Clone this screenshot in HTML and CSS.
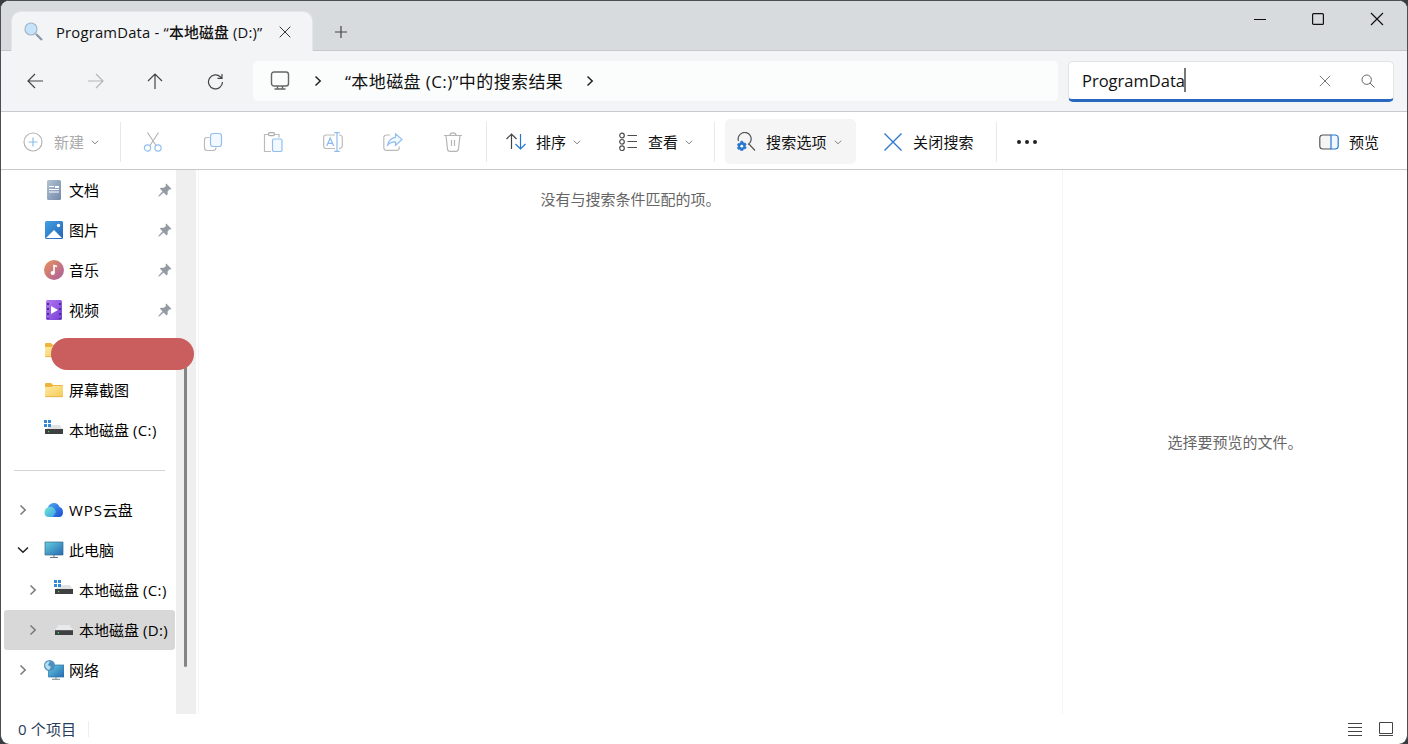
FILE: index.html
```html
<!DOCTYPE html>
<html lang="zh-CN">
<head>
<meta charset="utf-8">
<title>ProgramData</title>
<link rel="stylesheet" href="styles.css">
</head>
<body>
<svg class="defs" width="0" height="0">
  <defs>
    <linearGradient id="gDoc" x1="0" y1="0" x2="1" y2="1"><stop offset="0" stop-color="#b3c3d3"/><stop offset="1" stop-color="#7189aa"/></linearGradient>
    <linearGradient id="gPic" x1="0" y1="0" x2="1" y2="1"><stop offset="0" stop-color="#43a1e3"/><stop offset="1" stop-color="#2463b6"/></linearGradient>
    <linearGradient id="gMusic" x1="0" y1="0" x2="1" y2="1"><stop offset="0" stop-color="#eb9259"/><stop offset="1" stop-color="#a75da0"/></linearGradient>
    <linearGradient id="gVideo" x1="0" y1="0" x2="1" y2="1"><stop offset="0" stop-color="#b476f0"/><stop offset="1" stop-color="#7540d6"/></linearGradient>
    <linearGradient id="gFolder" x1="0" y1="0" x2="1" y2="1"><stop offset="0" stop-color="#fdeaa4"/><stop offset="1" stop-color="#f5ca56"/></linearGradient>
    <linearGradient id="gScreen" x1="0" y1="0" x2="1" y2="1"><stop offset="0" stop-color="#65cfdc"/><stop offset="1" stop-color="#2668b5"/></linearGradient>
    <linearGradient id="gCloudA" x1="0" y1="0" x2="1" y2="1"><stop offset="0" stop-color="#75ead0"/><stop offset="1" stop-color="#389de8"/></linearGradient>
    <linearGradient id="gCloudB" x1="0" y1="0" x2="1" y2="1"><stop offset="0" stop-color="#51a8f5"/><stop offset="1" stop-color="#174cd0"/></linearGradient>
    <symbol id="pin" viewBox="0 0 14 14"><path fill="#949ba3" d="M8.2.5 13.4 5.700l-1.100.8-.8-.2-1.900 2.300.1 2.700-1.100 1.100-3-3L1.200 13.500.4 13.600l.1-.8 4-4.500-2.600-2.600 1-1 3 .1 2.100-1.800-.5-1.400z"/></symbol>
    <symbol id="folder" viewBox="0 0 20 16"><path fill="#eeb43c" d="M1 2Q1 1 2 1h5l2 2h9q1 0 1 1v3H1z"/><path fill="url(#gFolder)" d="M1 5h6l2-1h10v10q0 1-1 1H2q-1 0-1-1z"/><path stroke="#dca637" stroke-width=".7" d="M1.500 14.700h17"/></symbol>
    <symbol id="drive" viewBox="0 0 20 12"><path fill="#e9eaec" d="M4.500 1h11L19 6H1z"/><path fill="#3e4041" d="M1 6h18v5H1z"/><path fill="#686b6c" d="M1 6h18v.8H1z"/><path fill="#42e44c" d="M3.800 8h1.200v1.500H3.800z"/></symbol>
    <symbol id="systemDrive" viewBox="0 0 20 18"><path fill="#e1e2e4" d="M8 6h8l3 4.500H1z"/><path fill="#3e4041" d="M1 10h18v5H1z"/><path fill="#42e44c" d="M4 12h1.200v1.200H4z"/><path fill="#3289d4" d="M0 1h3v3H0zm4 0h3v3H4zM0 5h3v3H0zm4 0h3v3H4z"/></symbol>
    <symbol id="more" viewBox="0 0 8 5"><path d="m.8.8 3.200 3 3.200-3" fill="none" stroke="currentColor" stroke-width="1"/></symbol>
    <symbol id="right" viewBox="0 0 8 12"><path d="m1.500 1.500 4.700 4.500-4.700 4.500" fill="none" stroke="currentColor" stroke-width="1.500"/></symbol>
  </defs>
</svg>

<div class="window">
  <header class="titlebar">
    <div class="tab">
      <svg class="tab-icon" width="20" height="20" viewBox="0 0 20 20" fill="none"><path d="m12 12 6 6" stroke="#8797a9" stroke-width="2.200"/><circle cx="7" cy="7" r="6" fill="#c5e4fb" stroke="#a5b5c6" stroke-width="1.200"/></svg>
      <span class="tab-title">ProgramData - “本地磁盘 (D:)”</span>
      <svg class="tab-close" width="12" height="12" viewBox="0 0 12 12"><path d="m.7.700 10.600 10.600m0-10.600L.7 11.300" stroke="#333"/></svg>
    </div>
    <svg class="new-tab" width="14" height="14" viewBox="0 0 14 14"><path d="M7 1v12M1 7h12" stroke="#444" stroke-width="1.200"/></svg>
    <div class="controls">
      <svg width="14" height="14" viewBox="0 0 14 14"><path d="M2 7.500h12" stroke="#111"/></svg>
      <svg width="14" height="14" viewBox="0 0 14 14"><rect x="1.600" y="1.600" width="10.800" height="10.800" rx="1" fill="none" stroke="#111" stroke-width="1.200"/></svg>
      <svg width="14" height="14" viewBox="0 0 14 14"><path d="m1 1 12 12m0-12L1 13" stroke="#111" stroke-width="1.200"/></svg>
    </div>
  </header>

  <nav class="navbar">
    <div class="nav-buttons">
      <svg width="18" height="18" viewBox="0 0 18 18"><path d="M17 9H2m7-7L2 9l7 7"/></svg>
      <svg class="off" width="18" height="18" viewBox="0 0 18 18"><path d="M2 9h15M10 2l7 7-7 7"/></svg>
      <svg width="18" height="18" viewBox="0 0 18 18"><path d="M9 17V2M2 9l7-7 7 7"/></svg>
      <svg width="18" height="18" viewBox="0 0 18 18"><path d="M16.500 10a7 7 0 1 1-2-5l1.500 1.300M16 2v4.300h-4.500"/></svg>
    </div>
    <div class="address">
      <svg class="pc" width="20" height="20" viewBox="0 0 20 20"><rect x="1.500" y="1" width="17" height="14" rx="2.500"/><path d="M7.500 15v2.500m5-2.500v2.500M4.500 18h11"/></svg>
      <svg class="crumb" width="8" height="12"><use href="#right"/></svg>
      <span class="path">“本地磁盘 (C:)”中的搜索结果</span>
      <svg class="crumb" width="8" height="12"><use href="#right"/></svg>
    </div>
    <div class="search">
      <span class="query">ProgramData</span><i class="caret"></i>
      <svg class="clear" width="12" height="12" viewBox="0 0 12 12"><path d="m.8.800 10.400 10.400m0-10.400L.8 11.200"/></svg>
      <svg class="find" width="14" height="14" viewBox="0 0 14 14"><circle cx="5.700" cy="5.700" r="4.700"/><path d="m9 9 4.500 4.500"/></svg>
    </div>
  </nav>

  <div class="toolbar">
    <div class="tool new"><svg width="20" height="20" viewBox="0 0 20 20"><circle cx="10" cy="10" r="9" stroke="#b5b5b5"/><path d="M10 5.500v9M5.500 10h9" stroke="#8dbde9"/></svg><span>新建</span><svg class="drop" width="8" height="5"><use href="#more"/></svg></div>
    <i class="rule"></i>
    <div class="edit-tools">
      <svg width="20" height="20" viewBox="0 0 20 20"><path d="M4.500.5 13 13.500M15.500.5 7 13.500" stroke="#b6b6b6"/><circle cx="4.500" cy="16" r="3.100" stroke="#91c0ef"/><circle cx="15" cy="16" r="3.100" stroke="#91c0ef"/></svg>
      <svg width="20" height="20" viewBox="0 0 20 20"><path d="M6.500 5.500H4q-2.500 0-2.500 2.500v7.500Q1.500 18.500 4 18.500h6q3 0 3-3" stroke="#bbb"/><rect x="7.500" y="1.500" width="11" height="13" rx="2.500" stroke="#91c0ef" fill="#f4f9ff"/></svg>
      <svg width="20" height="20" viewBox="0 0 20 20"><path d="M5.500 2.500h-4v17H8m8-14v-3h-4.500" stroke="#bbb"/><rect x="5.500" y=".7" width="6" height="3" rx="1.500" stroke="#aaa"/><rect x="9.500" y="7" width="9.500" height="12.500" rx="1.500" stroke="#91c0ef" fill="#f4f9ff"/></svg>
      <svg width="20" height="20" viewBox="0 0 20 20"><path d="M12 3H3Q.7 3 .7 5.500v8.500Q.7 16.500 3 16.500h9m4-13.500q3.300 0 3.300 3v7.500q0 3-3.300 3" stroke="#bbb"/><path d="m3.700 14 3.500-8 3.500 8m-6-2.600h5M14 .7v18.600m-2.700-18.600h5.400m-5.400 18.600h5.400" stroke="#8bbbed"/></svg>
      <svg width="20" height="20" viewBox="0 0 20 20"><path d="M7 3H3.500Q.8 3 .8 5.500v10Q.8 18.300 3.500 18.300h10q2.800 0 2.800-2.800v-1" stroke="#bbb"/><path d="M12.500 1.800v3.500Q6 6 4.600 13q3-3.300 7.900-3.200v3.500L19 7.500z" stroke="#91c0ef" fill="#f4f9ff"/></svg>
      <svg width="20" height="20" viewBox="0 0 20 20"><path d="M1 3.500h18M7 3.500q0-2.700 3-2.700t3 2.700m-10 0 1.500 13.500q.2 2.300 2.500 2.300h6q2.300 0 2.500-2.300L17 3.500M8.500 8v6m3-6v6" stroke="#b5b5b5"/></svg>
    </div>
    <i class="rule"></i>
    <div class="tool sort"><svg width="20" height="20" viewBox="0 0 20 20"><path d="M5.500 17V2M.5 7l5-5 5 5" stroke="#444" stroke-width="1.200"/><path d="M14.500 2v15m-5-5 5 5 5-5" stroke="#2376cf" stroke-width="1.200"/></svg><span>排序</span><svg class="drop" width="8" height="5"><use href="#more"/></svg></div>
    <div class="tool view"><svg width="20" height="20" viewBox="0 0 20 20" stroke="#4e4e4e"><circle cx="4" cy="3.500" r="2.300"/><circle cx="4" cy="9.800" r="2.300"/><circle cx="4" cy="16.200" r="2.300"/><path d="M9.500 3.500H19M9.500 9.500H19m-9.500 6H19"/></svg><span>查看</span><svg class="drop" width="8" height="5"><use href="#more"/></svg></div>
    <i class="rule"></i>
    <div class="tool options"><svg width="20" height="20" viewBox="0 0 20 20"><path d="M2.500 9A6.500 6.500 0 1 1 12 12.500l1-.5 6 6.500" stroke="#555"/><path d="m4.600 9.500 1.200-.6 1.200.6.600 1.600 1.800-.2.900 1.600-1.100 1.400 1.100 1.500-.9 1.600-1.800-.2-.6 1.700H4.600L4 17.200l-1.800.2-.9-1.600 1.100-1.500-1.100-1.400.9-1.600 1.800.2z" fill="#2b76cf" stroke="#2b76cf" stroke-width=".5"/><circle cx="5.800" cy="14.200" r="1.400" fill="#fff"/></svg><span>搜索选项</span><svg class="drop" width="8" height="5"><use href="#more"/></svg></div>
    <div class="tool close-search"><svg width="20" height="20" viewBox="0 0 20 20"><path d="m1.500 1.500 17 17m0-17-17 17" stroke="#2b76cf" stroke-width="1.300"/></svg><span>关闭搜索</span></div>
    <i class="rule"></i>
    <svg class="dots" width="22" height="6" viewBox="0 0 22 6"><circle cx="3" cy="3" r="2"/><circle cx="11" cy="3" r="2"/><circle cx="19" cy="3" r="2"/></svg>
    <div class="tool preview-tool"><svg width="20" height="16" viewBox="0 0 20 16"><path d="M12 1H4Q.8 1 .8 4v8q0 3 3.200 3h8" stroke="#555" fill="#f5f5f5"/><path d="M12 1h4q3.200 0 3.200 3v8q0 3-3.200 3h-4z" stroke="#2b76cf" fill="#eff7ff"/></svg><span>预览</span></div>
  </div>

  <main class="content">
    <aside class="sidebar">
      <div class="tree">
        <div class="item"><svg class="icon" width="20" height="20" viewBox="0 0 20 20"><rect x="3" width="14" height="20" rx="1.500" fill="url(#gDoc)"/><path d="M5 6.500h5m-5 3h10m-10 2.500h10" stroke="#fff" stroke-width="1.200"/><path fill="#fff" d="M11 6h4v2h-4z"/></svg><span>文档</span><svg class="pin" width="14" height="14"><use href="#pin"/></svg></div>
        <div class="item"><svg class="icon" width="20" height="20" viewBox="0 0 20 20"><rect x="1" y="1" width="18" height="18" rx="1.500" fill="url(#gPic)"/><path fill="#fff" d="m2 18 8-8 8 8z"/><circle cx="14.500" cy="5.500" r="1.700" fill="#fff"/></svg><span>图片</span><svg class="pin" width="14" height="14"><use href="#pin"/></svg></div>
        <div class="item"><svg class="icon" width="20" height="20" viewBox="0 0 20 20"><circle cx="10" cy="10" r="10" fill="url(#gMusic)"/><circle cx="8.700" cy="13" r="2.100" fill="#fff"/><path d="M10 13V5.500l3 1" fill="none" stroke="#fff" stroke-width="1.600"/></svg><span>音乐</span><svg class="pin" width="14" height="14"><use href="#pin"/></svg></div>
        <div class="item"><svg class="icon" width="20" height="20" viewBox="0 0 20 20"><rect x="2" width="16" height="20" rx="1.500" fill="url(#gVideo)"/><path d="M4 3v16M16 3v16" stroke="#482e91" stroke-width="2" stroke-dasharray="2 3"/><path d="m7 6 7 4-7 4z" fill="#fff"/></svg><span>视频</span><svg class="pin" width="14" height="14"><use href="#pin"/></svg></div>
        <div class="item"><svg class="icon" width="20" height="16"><use href="#folder"/></svg><i class="redaction"></i></div>
        <div class="item"><svg class="icon" width="20" height="16"><use href="#folder"/></svg><span>屏幕截图</span></div>
        <div class="item system"><svg class="icon" width="20" height="18"><use href="#systemDrive"/></svg><span>本地磁盘 <b>(C:)</b></span></div>
        <div class="divider"></div>
        <div class="item"><svg class="arrow" width="8" height="12"><use href="#right"/></svg><svg class="icon" width="20" height="16" viewBox="0 0 20 16"><path fill="url(#gCloudB)" d="M4 5Q6 1 10 1q4 0 5.500 4Q19 6 19 10q0 5-4 5H5z"/><path fill="url(#gCloudA)" d="M5 15Q.5 15 .5 10.500T5 5q5-1.500 7 5l-3 5z"/></svg><span><b class="wps">WPS</b>云盘</span></div>
        <div class="item"><svg class="arrow open" width="12" height="8" viewBox="0 0 12 8"><path d="m1 1.500 5 4.700 5-4.700" fill="none" stroke="#222" stroke-width="1.500"/></svg><svg class="icon" width="20" height="18" viewBox="0 0 20 18"><path d="M1 1h18v13H1z" fill="url(#gScreen)" stroke="#346b89" stroke-width=".7"/><path d="M10 14v2m-4 .5h8" stroke="#68747d"/></svg><span>此电脑</span></div>
        <div class="item child system"><svg class="arrow" width="8" height="12"><use href="#right"/></svg><svg class="icon" width="20" height="18"><use href="#systemDrive"/></svg><span>本地磁盘 <b>(C:)</b></span></div>
        <div class="item child selected"><svg class="arrow" width="8" height="12"><use href="#right"/></svg><svg class="icon" width="20" height="12"><use href="#drive"/></svg><span>本地磁盘 <b>(D:)</b></span></div>
        <div class="item"><svg class="arrow" width="8" height="12"><use href="#right"/></svg><svg class="icon" width="20" height="20" viewBox="0 0 20 20"><path d="M4.500 5H20v12H4.500z" fill="url(#gScreen)" stroke="#2874aa" stroke-width=".7"/><circle cx="5.500" cy="5.500" r="5.500" fill="#4c8fc0"/><path d="M1 4q2-3 5-3L4 5l3 2-2 3Q1 9 1 4" fill="#b5deea"/><path d="M12 17v2m-4 .3h8" stroke="#79858b"/></svg><span>网络</span></div>
      </div>
      <div class="scroll"><i class="thumb"></i></div>
    </aside>
    <section class="results">没有与搜索条件匹配的项。</section>
    <section class="preview">选择要预览的文件。</section>
  </main>

  <footer class="status"><span class="count">0 个项目</span>
    <svg width="14" height="14" viewBox="0 0 14 14"><path d="M0 1.500h14m-14 4h14m-14 4h14m-14 4h14" stroke="#444"/></svg>
    <svg width="14" height="14" viewBox="0 0 14 14"><path d="M.5.500h13v11H.5zM0 13.500h14" stroke="#444" fill="none"/></svg>
  </footer>
</div>
</body>
</html>
```
FILE: styles.css
```css
* { box-sizing: border-box; }
body { margin: 0; background: #383b41; font: 15px "Open Sans", "Noto Sans CJK SC", sans-serif; color: #111; overflow: hidden; }
svg { display: block; flex: none; }
i { font-style: normal; }
b { font-weight: 400; }
.defs { position: absolute; }
.window { height: 744px; display: flex; flex-direction: column; border: 1px solid #4b4e55; border-bottom: 0; border-radius: 9px; background: #fff; overflow: hidden; }
.titlebar { height: 50px; flex: none; display: flex; align-items: flex-start; background: #d8dbde; border-bottom: 1px solid #c6c8cb; }
.tab { width: 302px; height: 40px; margin: 10px 0 0 10px; padding-left: 12px; display: flex; align-items: center; background: #f3f4f6; border: 1px solid #e3e5e7; border-bottom: 0; border-radius: 10px 10px 0 0; }
.tab-title { width: 218px; padding-left: 12px; padding-bottom: 1px; white-space: nowrap; font-size: 14.800px; font-weight: 500; letter-spacing: .2px; }
.tab-close { margin-left: 17px; }
.new-tab { margin: 24px 0 0 21px; }
.controls { display: flex; gap: 45px; margin: 11px 23px 0 auto; }
.navbar { height: 61px; flex: none; display: flex; align-items: center; background: #f3f4f6; border-bottom: 1px solid #c8c9cc; }
.nav-buttons { width: 252px; padding-left: 25px; display: flex; gap: 42px; fill: none; stroke: #444; stroke-width: 1.200; }
.off { stroke: #b5b6b8; }
.address { width: 805px; height: 40px; display: flex; align-items: center; border-radius: 5px; background: #fbfcfc; padding-left: 17px; }
.pc { fill: none; stroke: #666; stroke-width: 1.400; }
.crumb { margin-left: 24px; color: #222; }
.path { width: 219px; margin-left: 23px; padding-bottom: 2px; font-size: 17px; letter-spacing: .4px; white-space: nowrap; }
.path + .crumb { margin-left: 22px; }
.search { width: 326px; height: 41px; margin-left: 10px; padding-left: 13px; display: flex; align-items: center; background: #fff; border: 1px solid #e2e3e4; border-bottom: 3px solid #2869bf; border-radius: 5px; }
.query { font-size: 16.500px; width: 102px; white-space: nowrap; }
.caret { width: 2px; height: 24px; background: #777; }
.clear { margin: 2px 0 0 133px; fill: none; stroke: #777; }
.find { margin: 2px 0 0 30px; fill: none; stroke: #666; }
.toolbar { height: 58px; flex: none; display: flex; align-items: center; padding-top: 2px; border-bottom: 1px solid #c8c8c8; }
.toolbar svg { fill: none; stroke-width: 1.200; }
.toolbar .dots { margin-left: 19px; fill: #222; }
.tool { height: 45px; display: flex; align-items: center; white-space: nowrap; }
.tool span { margin-left: 10px; }
.toolbar .drop { margin: 1px 0 0 7px; color: #888; }
.new { width: 119px; padding-left: 22px; color: #aaa; }
.new span { margin-left: 11px; }
.rule { width: 1px; height: 40px; background: #e8e8e8; }
.edit-tools { width: 365px; display: flex; gap: 40px; padding-left: 22px; }
.sort { width: 112px; padding-left: 19px; }
.view { width: 115px; padding-left: 19px; }
.options { width: 131px; margin-left: 10px; padding-left: 11px; background: #f5f5f5; border-radius: 5px; }
.options span { letter-spacing: .2px; }
.close-search { width: 140px; padding-left: 27px; }
.close-search span { letter-spacing: .2px; }
.preview-tool { margin: 0 28px 0 auto; }
.content { height: 544px; flex: none; display: flex; }
.sidebar { width: 197px; display: flex; }
.tree { width: 175px; }
.item { position: relative; height: 40px; display: flex; align-items: center; padding-left: 43px; white-space: nowrap; color: #000; }
.item span { margin-left: 5px; padding-bottom: 2px; }
.item b { letter-spacing: .4px; }
.item .wps { letter-spacing: .9px; }
.system .icon { margin-bottom: 4px; }
.pin { margin-left: auto; margin-right: 4px; }
.arrow { width: 8px; margin: 0 17px 0 -25px; color: #777; }
.arrow.open { width: 12px; margin: 0 15px 0 -27px; }
.child { padding-left: 53px; }
.selected { margin-left: 3px; padding-left: 50px; width: 171px; background: #d8d8d8; border-radius: 3px; }
.redaction { position: absolute; left: 50px; top: 8px; width: 143px; height: 32px; border-radius: 17px; background: #ca5e5e; z-index: 2; }
.divider { width: 151px; height: 40px; margin-left: 13px; padding-top: 20px; }
.divider::before { content: ""; display: block; height: 1px; background: #d3d4d6; }
.scroll { width: 20px; background: #efefef; padding: 196px 0 0 8px; }
.thumb { display: block; width: 3px; height: 301px; border-radius: 2px; background: #858585; }
.results { width: 864px; border-left: 1px solid #f5f5f5; padding-top: 18px; text-align: center; color: #666; }
.preview { flex: 1; border-left: 1px solid #f5f5f5; display: flex; align-items: center; justify-content: center; padding-bottom: 2px; color: #666; }
.status { flex: 1; display: flex; align-items: center; padding: 0 14px 0 17px; color: #263c58; font-size: 15px; gap: 17px; }
.count { margin-right: auto; padding-right: 12px; border-right: 1px solid #eee; line-height: 16px; letter-spacing: .15px; }
```
